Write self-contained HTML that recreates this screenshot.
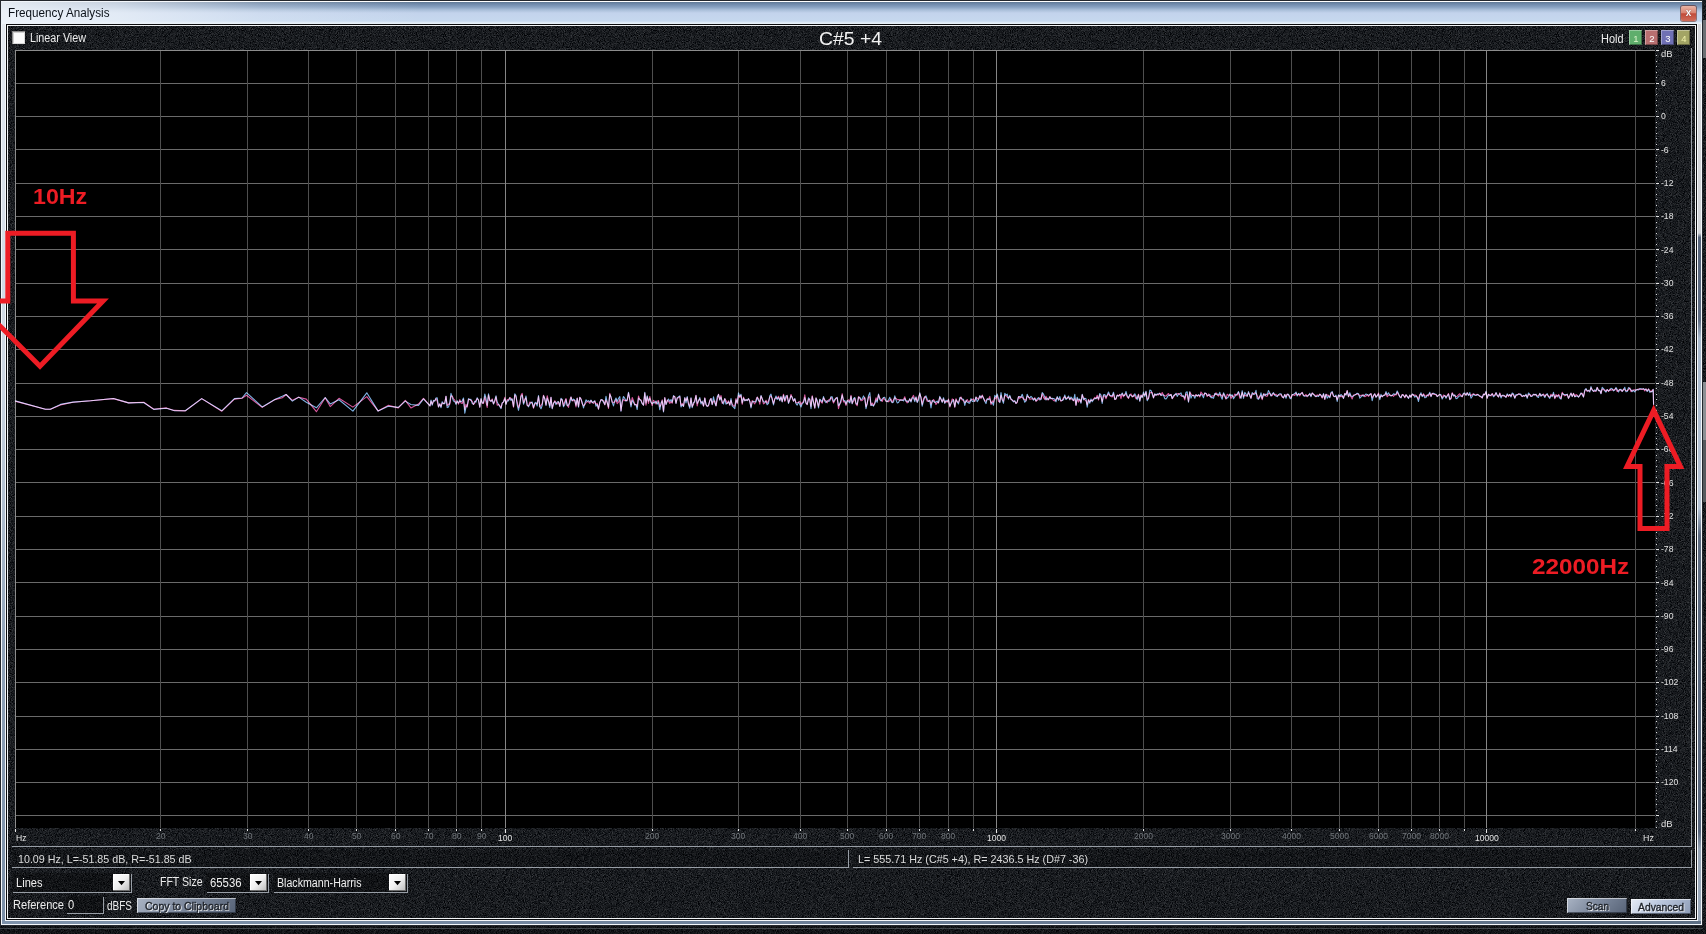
<!DOCTYPE html>
<html lang="en"><head><meta charset="utf-8"><title>Frequency Analysis</title>
<style>
html,body{margin:0;padding:0}
body{width:1706px;height:934px;overflow:hidden;position:relative;background:#17181b;font-family:"Liberation Sans",sans-serif}
#root{position:absolute;left:0;top:0;width:1706px;height:934px;will-change:transform}
#root>div,#root>span,#root>svg{position:absolute;display:block}
.t{white-space:nowrap;line-height:1;transform-origin:0 0}
#tb{background:
 linear-gradient(90deg,rgba(238,243,249,.92) 0,rgba(238,243,249,.72) 115px,rgba(238,243,249,.25) 260px,rgba(238,243,249,0) 420px),
 linear-gradient(180deg,#fff 0,#fff 1px,#5f7894 1px,#6f89aa 3px,#86a0c0 6px,#aabfd9 9px,#c3d3ec 12px,#c6d8ee 20px,#e4eef7 22px,#e8f1f9 23px)}
#panel{background:#1c1e21}
.hb{width:13px;height:15px;font-size:9.5px;line-height:18px;text-indent:1px;text-align:center;box-shadow:inset 1px 1px 0 rgba(255,255,255,.35),inset -1px -1px 0 rgba(0,0,0,.35)}
#cls{background:linear-gradient(180deg,#e9b4a4 0,#d98472 45%,#c24b39 52%,#cf6c5a 100%);border-radius:2px;box-shadow:0 0 0 1px rgba(90,30,20,.55)}
#cls span{position:absolute;left:0;top:-1.5px;width:15px;text-align:center;color:#fff;font-weight:bold;font-size:10px;line-height:15px;text-shadow:0 0 1px #522}
.dd{width:17px;height:17px;background:linear-gradient(135deg,#ffffff 0%,#f0f0f0 50%,#b8b8b8 100%);box-shadow:inset -1px -1px 0 #6c6c6c,inset 1px 1px 0 #fff}
.dd i{position:absolute;left:5px;top:7px;border-left:3.5px solid transparent;border-right:3.5px solid transparent;border-top:4px solid #000}
.btn{box-shadow:inset 1px 1px 0 rgba(255,255,255,.55),inset -1px -1px 0 rgba(20,25,35,.55)}
</style></head>
<body>
<div id="root">
<svg style="left:0;top:0" width="1706" height="934"><filter id="nz" x="0" y="0" width="100%" height="100%" color-interpolation-filters="sRGB"><feTurbulence type="fractalNoise" baseFrequency="1.15" numOctaves="2" seed="4"/><feColorMatrix type="matrix" values="0.42 0 0 0 -0.113  0.42 0 0 0 -0.103  0.42 0 0 0 -0.088  0 0 0 0 1"/></filter><rect width="1706" height="934" filter="url(#nz)"/></svg>
<div style="left:0px;top:926px;width:1706px;height:8px;background:rgba(0,0,0,.22);"></div>
<div style="left:0px;top:928px;width:1703px;height:1px;background:rgba(120,128,136,.45);"></div>
<div style="left:1703px;top:20px;width:3px;height:38px;background:#6c7074;"></div>
<div style="left:1703px;top:382px;width:3px;height:58px;background:#8c9094;"></div>
<div style="left:1703px;top:440px;width:3px;height:62px;background:#565a5e;"></div>
<div style="left:0px;top:0px;width:1703px;height:926px;background:#23272d;"></div>
<div style="left:1px;top:1px;width:1701px;height:924px;background:#f4f7fa;"></div>
<div style="left:2px;top:2px;width:1699px;height:922px;background:#8296ae;"></div>
<div style="left:2px;top:24px;width:3px;height:897px;background:linear-gradient(180deg,#e3e9f0 0,#ccd6e2 40%,#8fa2b8 70%,#7a8ea6 100%);"></div>
<div style="left:1698px;top:24px;width:3px;height:897px;background:linear-gradient(180deg,#d6d8dc 0,#d2d4d8 23.3%,#55637a 23.8%,#5d6b82 33%,#a9b9cd 35%,#b7c5d7 54%,#5a687e 57%,#55637a 90%,#97a5b7 92%,#9eabbb 100%);"></div>
<div style="left:2px;top:921px;width:1699px;height:3px;background:linear-gradient(90deg,#7f93ab,#6b7e96 50%,#5d6f84);"></div>
<div id="tb" style="left:1px;top:1px;width:1701px;height:23px"></div>
<div style="left:5px;top:24px;width:1693px;height:897px;background:#f4f7fa;"></div>
<div style="left:6px;top:24px;width:1691px;height:896px;background:#0c0d0f;"></div>
<div style="left:7px;top:25px;width:1689px;height:894px;background:#f2f4f6;"></div>
<svg id="panel" style="left:8px;top:26px" width="1687" height="892"><rect width="1687" height="892" filter="url(#nz)"/></svg>
<div style="left:12px;top:846px;width:1680px;height:1px;background:#989ea6;"></div>
<div style="left:1691px;top:48px;width:1px;height:799px;background:#989ea6;"></div>
<div style="left:12px;top:850px;width:836px;height:17px;background:rgba(0,0,0,.16);"></div>
<div style="left:853px;top:850px;width:838px;height:17px;background:rgba(0,0,0,.16);"></div>
<div style="left:12px;top:867px;width:837px;height:1px;background:#989ea6;"></div>
<div style="left:848px;top:850px;width:1px;height:18px;background:#989ea6;"></div>
<div style="left:853px;top:867px;width:839px;height:1px;background:#989ea6;"></div>
<div style="left:1691px;top:850px;width:1px;height:18px;background:#989ea6;"></div>
<div style="left:15px;top:50px;width:1640px;height:778px;background:#000;"></div>
<svg style="left:0;top:0" width="1706" height="934" viewBox="0 0 1706 934">
<rect x="15" y="83" width="1640" height="1" fill="#6a6a6a"/>
<rect x="15" y="116" width="1640" height="1" fill="#6a6a6a"/>
<rect x="15" y="149" width="1640" height="1" fill="#6a6a6a"/>
<rect x="15" y="183" width="1640" height="1" fill="#6a6a6a"/>
<rect x="15" y="216" width="1640" height="1" fill="#6a6a6a"/>
<rect x="15" y="249" width="1640" height="1" fill="#6a6a6a"/>
<rect x="15" y="283" width="1640" height="1" fill="#6a6a6a"/>
<rect x="15" y="316" width="1640" height="1" fill="#6a6a6a"/>
<rect x="15" y="349" width="1640" height="1" fill="#6a6a6a"/>
<rect x="15" y="383" width="1640" height="1" fill="#6a6a6a"/>
<rect x="15" y="416" width="1640" height="1" fill="#6a6a6a"/>
<rect x="15" y="449" width="1640" height="1" fill="#6a6a6a"/>
<rect x="15" y="482" width="1640" height="1" fill="#6a6a6a"/>
<rect x="15" y="516" width="1640" height="1" fill="#6a6a6a"/>
<rect x="15" y="549" width="1640" height="1" fill="#6a6a6a"/>
<rect x="15" y="582" width="1640" height="1" fill="#6a6a6a"/>
<rect x="15" y="616" width="1640" height="1" fill="#6a6a6a"/>
<rect x="15" y="649" width="1640" height="1" fill="#6a6a6a"/>
<rect x="15" y="682" width="1640" height="1" fill="#6a6a6a"/>
<rect x="15" y="716" width="1640" height="1" fill="#6a6a6a"/>
<rect x="15" y="749" width="1640" height="1" fill="#6a6a6a"/>
<rect x="15" y="782" width="1640" height="1" fill="#6a6a6a"/>
<rect x="15" y="815" width="1640" height="1" fill="#6a6a6a"/>
<rect x="160" y="50" width="1" height="778" fill="#4e4e4e"/>
<rect x="247" y="50" width="1" height="778" fill="#4e4e4e"/>
<rect x="308" y="50" width="1" height="778" fill="#4e4e4e"/>
<rect x="356" y="50" width="1" height="778" fill="#4e4e4e"/>
<rect x="395" y="50" width="1" height="778" fill="#4e4e4e"/>
<rect x="428" y="50" width="1" height="778" fill="#4e4e4e"/>
<rect x="456" y="50" width="1" height="778" fill="#4e4e4e"/>
<rect x="481" y="50" width="1" height="778" fill="#4e4e4e"/>
<rect x="505" y="50" width="1" height="778" fill="#858585"/>
<rect x="652" y="50" width="1" height="778" fill="#4e4e4e"/>
<rect x="738" y="50" width="1" height="778" fill="#4e4e4e"/>
<rect x="800" y="50" width="1" height="778" fill="#4e4e4e"/>
<rect x="847" y="50" width="1" height="778" fill="#4e4e4e"/>
<rect x="886" y="50" width="1" height="778" fill="#4e4e4e"/>
<rect x="919" y="50" width="1" height="778" fill="#4e4e4e"/>
<rect x="948" y="50" width="1" height="778" fill="#4e4e4e"/>
<rect x="973" y="50" width="1" height="778" fill="#4e4e4e"/>
<rect x="996" y="50" width="1" height="778" fill="#858585"/>
<rect x="1143" y="50" width="1" height="778" fill="#4e4e4e"/>
<rect x="1230" y="50" width="1" height="778" fill="#4e4e4e"/>
<rect x="1291" y="50" width="1" height="778" fill="#4e4e4e"/>
<rect x="1339" y="50" width="1" height="778" fill="#4e4e4e"/>
<rect x="1378" y="50" width="1" height="778" fill="#4e4e4e"/>
<rect x="1411" y="50" width="1" height="778" fill="#4e4e4e"/>
<rect x="1439" y="50" width="1" height="778" fill="#4e4e4e"/>
<rect x="1464" y="50" width="1" height="778" fill="#4e4e4e"/>
<rect x="1486" y="50" width="1" height="778" fill="#858585"/>
<rect x="1635" y="50" width="1" height="778" fill="#4e4e4e"/>
<rect x="15" y="50" width="1640" height="1" fill="#8c8c8c"/>
<rect x="15" y="50" width="1" height="778" fill="#8c8c8c"/>
<polyline points="15.1,400.9 45.4,409.2 50.4,409.2 60.5,404.4 73.0,402.1 90.7,400.8 113.4,398.5 128.6,402.9 143.7,402.5 153.8,409.4 166.4,408.2 174.0,410.6 185.3,410.8 201.7,398.6 221.8,410.8 234.4,398.6 242.0,398.0 246.5,392.7 262.2,406.9 274.8,399.6 282.3,396.3 286.1,394.5 292.4,401.1 298.7,397.1 306.3,402.2 316.4,407.8 325.2,397.5 330.2,403.9 339.0,399.8 352.9,411.1 366.8,392.8 378.1,411.1 388.2,406.2 398.3,407.4 405.3,401.1 410.9,404.5 418.5,405.4 423.5,398.9 430.0,405.9 431.0,400.1 432.2,405.2 433.5,400.4 434.8,401.1 436.0,398.0 437.2,397.8 438.5,406.9 439.8,404.1 441.0,407.7 442.2,401.7 443.5,403.6 444.8,403.6 446.0,396.4 447.2,407.6 448.5,407.1 449.8,402.7 451.0,393.3 452.2,397.2 453.5,401.1 454.8,401.6 456.0,404.4 457.2,400.7 458.5,403.0 459.8,401.0 461.0,401.8 462.2,400.8 463.5,398.0 464.8,413.2 466.0,407.1 467.2,406.0 468.5,398.6 469.8,399.6 471.0,399.4 472.2,403.3 473.5,404.4 474.8,401.2 476.0,402.2 477.2,397.7 478.5,400.3 479.8,407.1 481.0,398.5 482.2,403.2 483.5,402.5 484.8,394.0 486.0,398.5 487.2,405.5 488.5,393.9 489.8,400.5 491.0,401.3 492.2,399.8 493.5,404.0 494.8,400.2 496.0,395.8 497.2,402.0 498.5,404.2 499.8,406.4 501.0,408.6 502.2,402.9 503.5,401.8 504.8,398.8 506.0,404.2 507.2,400.7 508.5,400.9 509.8,397.8 511.0,400.4 512.2,398.9 513.5,406.5 514.8,393.8 516.0,395.6 517.2,404.8 518.5,410.3 519.8,404.0 521.0,396.3 522.2,395.2 523.5,404.2 524.8,400.9 526.0,396.0 527.2,404.7 528.5,406.8 529.8,404.2 531.0,402.6 532.2,402.0 533.5,407.7 534.8,403.0 536.0,402.3 537.2,406.0 538.5,395.5 539.8,406.8 541.0,408.7 542.2,405.4 543.5,395.7 544.8,398.4 546.0,405.5 547.2,398.1 548.5,401.7 549.8,407.5 551.0,397.4 552.2,408.8 553.5,403.3 554.8,401.5 556.0,404.6 557.2,401.9 558.5,401.7 559.8,406.4 561.0,398.4 562.2,399.5 563.5,406.8 564.8,404.4 566.0,399.5 567.2,405.7 568.5,405.0 569.8,402.8 571.0,397.1 572.2,400.8 573.5,399.1 574.8,400.2 576.0,405.3 577.2,398.2 578.5,407.1 579.8,397.4 581.0,399.2 582.2,402.5 583.5,407.9 584.8,403.7 586.0,399.8 587.2,401.4 588.5,400.6 589.8,402.0 591.0,400.1 592.2,402.7 593.5,401.7 594.8,400.9 596.0,406.3 597.2,404.4 598.5,409.0 599.8,402.6 601.0,399.6 602.2,399.9 603.5,402.1 604.8,404.6 606.0,396.4 607.2,402.6 608.5,407.1 609.8,394.4 611.0,396.8 612.2,402.2 613.5,405.9 614.8,400.4 616.0,398.0 617.2,401.5 618.5,398.5 619.8,396.6 621.0,411.2 622.2,401.4 623.5,396.5 624.8,398.4 626.0,401.2 627.2,399.6 628.5,392.4 629.8,400.0 631.0,406.9 632.2,400.4 633.5,402.3 634.8,404.9 636.0,404.5 637.2,409.5 638.5,398.1 639.8,399.4 641.0,400.6 642.2,403.7 643.5,405.2 644.8,392.4 646.0,403.1 647.2,395.9 648.5,401.2 649.8,398.4 651.0,402.3 652.2,403.7 653.5,402.5 654.8,402.9 656.0,401.0 657.2,404.1 658.5,401.8 659.8,409.8 661.0,403.0 662.2,400.7 663.5,412.0 664.8,397.8 666.0,404.5 667.2,401.6 668.5,399.0 669.8,401.6 671.0,399.5 672.2,402.3 673.5,395.5 674.8,397.0 676.0,403.5 677.2,398.0 678.5,396.8 679.8,395.9 681.0,406.9 682.2,404.7 683.5,406.4 684.8,397.6 686.0,403.0 687.2,396.6 688.5,404.5 689.8,408.3 691.0,397.8 692.2,407.7 693.5,402.7 694.8,401.7 696.0,395.5 697.2,403.5 698.5,401.3 699.8,397.6 701.0,404.0 702.2,401.1 703.5,405.9 704.8,398.2 706.0,404.3 707.2,406.5 708.5,405.1 709.8,401.1 711.0,398.5 712.2,404.6 713.5,396.8 714.8,402.7 716.0,405.8 717.2,397.1 718.5,394.4 719.8,400.2 721.0,397.1 722.2,401.9 723.5,404.0 724.8,398.6 726.0,404.1 727.2,403.3 728.5,401.8 729.8,404.7 731.0,398.6 732.2,405.9 733.5,407.2 734.8,408.6 736.0,399.9 737.2,402.7 738.5,392.9 739.8,396.6 741.0,394.2 742.2,403.0 743.5,398.0 744.8,400.9 746.0,399.5 747.2,400.6 748.5,398.6 749.8,401.5 751.0,407.9 752.2,402.0 753.5,401.2 754.8,401.7 756.0,402.0 757.2,397.2 758.5,400.6 759.8,401.7 761.0,395.5 762.2,398.8 763.5,401.7 764.8,402.3 766.0,401.4 767.2,404.7 768.5,403.3 769.8,395.9 771.0,394.1 772.2,399.4 773.5,404.9 774.8,399.1 776.0,396.0 777.2,399.5 778.5,397.5 779.8,400.8 781.0,396.5 782.2,402.0 783.5,395.4 784.8,400.5 786.0,395.8 787.2,395.8 788.5,403.4 789.8,399.5 791.0,395.9 792.2,397.1 793.5,401.1 794.8,398.6 796.0,403.7 797.2,405.1 798.5,402.1 799.8,404.4 801.0,407.0 802.2,403.6 803.5,402.6 804.8,397.6 806.0,402.9 807.2,404.4 808.5,397.8 809.8,399.7 811.0,408.7 812.2,396.5 813.5,402.3 814.8,407.9 816.0,398.1 817.2,400.3 818.5,408.0 819.8,399.2 821.0,400.3 822.2,401.9 823.5,396.6 824.8,401.1 826.0,402.6 827.2,400.7 828.5,401.3 829.8,400.9 831.0,396.7 832.2,396.9 833.5,401.8 834.8,399.4 836.0,398.4 837.2,397.4 838.5,405.7 839.8,404.1 841.0,399.8 842.2,395.1 843.5,400.2 844.8,400.5 846.0,404.2 847.2,400.5 848.5,401.7 849.8,402.9 851.0,396.2 852.2,403.8 853.5,398.7 854.8,397.5 856.0,403.4 857.2,404.3 858.5,397.3 859.8,397.2 861.0,399.8 862.2,398.9 863.5,395.9 864.8,398.5 866.0,408.6 867.2,403.4 868.5,395.6 869.8,392.6 871.0,405.5 872.2,404.8 873.5,406.1 874.8,403.8 876.0,400.0 877.2,402.3 878.5,394.1 879.8,399.7 881.0,400.8 882.2,399.1 883.5,397.5 884.8,397.4 886.0,401.1 887.2,401.8 888.5,400.2 889.8,397.3 891.0,401.0 892.2,402.8 893.5,402.1 894.8,395.9 896.0,399.9 897.2,402.9 898.5,402.5 899.8,399.9 901.0,400.1 902.2,400.0 903.5,400.9 904.8,398.4 906.0,401.1 907.2,400.9 908.5,402.1 909.8,398.6 911.0,402.0 912.2,397.9 913.5,397.8 914.8,401.6 916.0,396.9 917.2,402.4 918.5,399.9 919.8,392.9 921.0,398.0 922.2,406.2 923.5,400.7 924.8,397.3 926.0,395.9 927.2,399.3 928.5,401.5 929.8,400.7 931.0,407.9 932.2,400.4 933.5,401.2 934.8,402.5 936.0,402.0 937.2,401.2 938.5,402.9 939.8,396.4 941.0,399.0 942.2,402.4 943.5,397.7 944.8,403.4 946.0,400.3 947.2,401.4 948.5,399.9 949.8,406.2 951.0,403.6 952.2,401.4 953.5,399.8 954.8,406.9 956.0,399.8 957.2,401.5 958.5,404.0 959.8,397.6 961.0,397.9 962.2,399.2 963.5,399.3 964.8,405.4 966.0,400.4 967.2,402.1 968.5,402.9 969.8,403.2 971.0,398.6 972.2,401.4 973.5,401.1 974.8,401.2 976.0,397.0 977.2,401.7 978.5,399.7 979.8,395.6 981.0,397.5 982.2,395.8 983.5,398.4 984.8,401.3 986.0,403.6 987.2,398.7 988.5,399.6 989.8,398.6 991.0,403.0 992.2,402.4 993.5,405.2 994.8,395.4 996.0,397.3 997.2,394.0 998.5,398.7 999.8,402.6 1001.0,392.6 1002.2,399.9 1003.5,403.2 1004.8,393.2 1006.0,395.1 1007.2,394.2 1008.5,399.2 1009.8,395.3 1011.0,399.0 1012.2,400.1 1013.5,401.9 1014.8,400.7 1016.0,403.5 1017.2,401.7 1018.5,396.8 1019.8,396.5 1021.0,397.2 1022.2,394.2 1023.5,398.4 1024.8,402.2 1026.0,400.8 1027.2,394.2 1028.5,397.2 1029.8,397.8 1031.0,396.4 1032.2,397.6 1033.5,400.3 1034.8,398.4 1036.0,401.0 1037.2,398.9 1038.5,397.5 1039.8,400.0 1041.0,399.3 1042.2,392.5 1043.5,394.2 1044.8,397.3 1046.0,400.0 1047.2,398.1 1048.5,399.6 1049.8,396.9 1051.0,398.6 1052.2,398.3 1053.5,398.5 1054.8,399.3 1056.0,401.8 1057.2,396.5 1058.5,400.3 1059.8,396.6 1061.0,400.8 1062.2,400.5 1063.5,399.5 1064.8,395.0 1066.0,399.5 1067.2,398.4 1068.5,396.0 1069.8,399.8 1071.0,397.0 1072.2,398.4 1073.5,400.6 1074.8,394.4 1076.0,405.1 1077.2,397.2 1078.5,399.9 1079.8,399.0 1081.0,403.3 1082.2,394.2 1083.5,399.8 1084.8,398.2 1086.0,398.7 1087.2,407.2 1088.5,400.1 1089.8,403.2 1091.0,399.0 1092.2,401.7 1093.5,399.6 1094.8,398.3 1096.0,398.8 1097.2,397.0 1098.5,399.0 1099.8,393.5 1101.0,395.0 1102.2,403.5 1103.5,394.7 1104.8,394.5 1106.0,397.3 1107.2,395.0 1108.5,392.0 1109.8,395.3 1111.0,395.6 1112.2,396.0 1113.5,392.2 1114.8,399.5 1116.0,398.5 1117.2,395.3 1118.5,396.1 1119.8,394.8 1121.0,395.3 1122.2,393.0 1123.5,395.6 1124.8,395.4 1126.0,391.5 1127.2,395.8 1128.5,397.9 1129.8,394.6 1131.0,395.4 1132.2,396.4 1133.5,396.5 1134.8,393.7 1136.0,396.1 1137.2,399.7 1138.5,394.8 1139.8,401.3 1141.0,395.3 1142.2,397.7 1143.5,392.1 1144.8,396.4 1146.0,391.2 1147.2,400.8 1148.5,398.5 1149.8,390.0 1151.0,390.5 1152.2,394.0 1153.5,397.7 1154.8,393.7 1156.0,395.4 1157.2,393.9 1158.5,394.1 1159.8,393.4 1161.0,395.4 1162.2,394.9 1163.5,395.0 1164.8,398.6 1166.0,398.9 1167.2,397.3 1168.5,395.1 1169.8,395.7 1171.0,394.5 1172.2,398.5 1173.5,395.8 1174.8,394.8 1176.0,393.3 1177.2,396.4 1178.5,394.3 1179.8,393.8 1181.0,392.9 1182.2,396.2 1183.5,395.8 1184.8,398.2 1186.0,392.2 1187.2,391.8 1188.5,402.3 1189.8,391.9 1191.0,398.1 1192.2,395.4 1193.5,395.2 1194.8,398.2 1196.0,394.9 1197.2,396.2 1198.5,394.7 1199.8,395.9 1201.0,394.2 1202.2,395.1 1203.5,397.7 1204.8,392.9 1206.0,393.4 1207.2,395.2 1208.5,395.5 1209.8,394.4 1211.0,397.6 1212.2,397.4 1213.5,398.3 1214.8,393.5 1216.0,394.5 1217.2,394.0 1218.5,395.0 1219.8,392.3 1221.0,396.7 1222.2,399.2 1223.5,392.8 1224.8,395.3 1226.0,398.6 1227.2,398.0 1228.5,396.9 1229.8,394.0 1231.0,395.7 1232.2,394.8 1233.5,398.8 1234.8,396.8 1236.0,394.7 1237.2,394.0 1238.5,391.6 1239.8,395.3 1241.0,398.4 1242.2,390.7 1243.5,398.3 1244.8,392.3 1246.0,394.1 1247.2,396.3 1248.5,391.6 1249.8,395.9 1251.0,398.2 1252.2,392.5 1253.5,394.5 1254.8,394.3 1256.0,390.4 1257.2,398.5 1258.5,399.3 1259.8,397.1 1261.0,392.8 1262.2,398.6 1263.5,393.8 1264.8,395.7 1266.0,394.0 1267.2,394.9 1268.5,390.5 1269.8,393.0 1271.0,396.0 1272.2,393.9 1273.5,392.7 1274.8,395.3 1276.0,395.9 1277.2,396.6 1278.5,394.6 1279.8,393.8 1281.0,393.7 1282.2,396.4 1283.5,397.9 1284.8,394.5 1286.0,398.3 1287.2,394.3 1288.5,394.2 1289.8,398.0 1291.0,398.9 1292.2,394.7 1293.5,394.3 1294.8,393.6 1296.0,392.0 1297.2,396.0 1298.5,393.4 1299.8,394.5 1301.0,393.7 1302.2,392.6 1303.5,395.8 1304.8,396.2 1306.0,395.8 1307.2,395.9 1308.5,395.7 1309.8,393.3 1311.0,396.7 1312.2,393.1 1313.5,394.4 1314.8,396.0 1316.0,396.6 1317.2,396.0 1318.5,396.5 1319.8,394.3 1321.0,395.1 1322.2,397.4 1323.5,393.6 1324.8,399.2 1326.0,394.2 1327.2,398.1 1328.5,396.1 1329.8,397.7 1331.0,392.6 1332.2,391.6 1333.5,395.9 1334.8,396.7 1336.0,395.2 1337.2,401.5 1338.5,394.9 1339.8,396.6 1341.0,394.4 1342.2,395.8 1343.5,398.4 1344.8,393.6 1346.0,395.2 1347.2,390.8 1348.5,396.7 1349.8,392.7 1351.0,396.0 1352.2,396.6 1353.5,395.7 1354.8,395.1 1356.0,394.2 1357.2,393.2 1358.5,393.7 1359.8,398.1 1361.0,396.9 1362.2,395.2 1363.5,396.2 1364.8,395.1 1366.0,394.0 1367.2,394.4 1368.5,395.4 1369.8,394.3 1371.0,393.8 1372.2,400.7 1373.5,395.3 1374.8,393.9 1376.0,397.3 1377.2,395.7 1378.5,394.0 1379.8,399.7 1381.0,394.4 1382.2,396.8 1383.5,395.2 1384.8,395.3 1386.0,391.6 1387.2,395.0 1388.5,392.8 1389.8,395.3 1391.0,395.9 1392.2,395.3 1393.5,393.9 1394.8,394.3 1396.0,394.3 1397.2,391.0 1398.5,393.6 1399.8,397.0 1401.0,397.9 1402.2,394.6 1403.5,395.5 1404.8,397.2 1406.0,394.8 1407.2,396.4 1408.5,398.5 1409.8,395.1 1411.0,397.1 1412.2,394.1 1413.5,394.8 1414.8,397.2 1416.0,395.8 1417.2,397.4 1418.5,401.5 1419.8,395.7 1421.0,392.8 1422.2,396.6 1423.5,394.6 1424.8,397.8 1426.0,397.4 1427.2,395.5 1428.5,394.8 1429.8,392.3 1431.0,396.6 1432.2,393.7 1433.5,393.2 1434.8,394.0 1436.0,394.2 1437.2,396.6 1438.5,395.6 1439.8,394.3 1441.0,394.8 1442.2,399.0 1443.5,396.7 1444.8,395.6 1446.0,398.2 1447.2,396.0 1448.5,394.2 1449.8,399.7 1451.0,398.0 1452.2,393.2 1453.5,396.1 1454.8,394.9 1456.0,398.7 1457.2,398.3 1458.5,396.6 1459.8,395.8 1461.0,396.0 1462.2,396.5 1463.5,393.2 1464.8,393.0 1466.0,395.2 1467.2,392.7 1468.5,395.5 1469.8,392.6 1471.0,398.1 1472.2,396.5 1473.5,394.0 1474.8,395.3 1476.0,395.5 1477.2,394.6 1478.5,394.9 1479.8,396.2 1481.0,396.2 1482.2,398.0 1483.5,394.1 1484.8,394.9 1486.0,391.3 1487.2,398.2 1488.5,394.3 1489.8,395.7 1491.0,394.9 1492.2,393.9 1493.5,396.8 1494.8,395.7 1496.0,392.6 1497.2,395.1 1498.5,396.8 1499.8,393.6 1501.0,397.9 1502.2,395.3 1503.5,395.2 1504.8,396.2 1506.0,397.4 1507.2,393.9 1508.5,395.7 1509.8,394.5 1511.0,396.9 1512.2,393.0 1513.5,394.0 1514.8,398.3 1516.0,394.6 1517.2,395.0 1518.5,394.1 1519.8,394.1 1521.0,394.4 1522.2,396.5 1523.5,395.4 1524.8,396.3 1526.0,394.2 1527.2,398.3 1528.5,393.0 1529.8,394.3 1531.0,396.5 1532.2,396.2 1533.5,394.2 1534.8,395.0 1536.0,394.2 1537.2,396.8 1538.5,397.4 1539.8,393.3 1541.0,396.2 1542.2,394.4 1543.5,394.9 1544.8,397.5 1546.0,394.8 1547.2,393.6 1548.5,396.7 1549.8,398.3 1551.0,395.4 1552.2,396.6 1553.5,392.3 1554.8,397.9 1556.0,396.0 1557.2,395.7 1558.5,395.5 1559.8,398.2 1561.0,399.2 1562.2,393.4 1563.5,394.3 1564.8,394.6 1566.0,394.9 1567.2,394.2 1568.5,398.3 1569.8,395.9 1571.0,393.1 1572.2,396.6 1573.5,393.6 1574.8,396.8 1576.0,396.3 1577.2,395.8 1578.5,397.1 1579.8,395.1 1581.0,392.9 1582.2,394.6 1583.5,397.0 1584.8,389.9 1586.0,388.6 1587.2,391.0 1588.5,390.2 1589.8,392.0 1591.0,386.6 1592.2,390.2 1593.5,391.4 1594.8,389.8 1596.0,391.2 1597.2,387.4 1598.5,390.7 1599.8,390.2 1601.0,393.7 1602.2,387.4 1603.5,388.6 1604.8,390.8 1606.0,392.2 1607.2,389.5 1608.5,390.9 1609.8,390.3 1611.0,388.3 1612.2,388.7 1613.5,390.9 1614.8,390.0 1616.0,387.4 1617.2,389.6 1618.5,391.9 1619.8,389.6 1621.0,389.4 1622.2,391.4 1623.5,389.9 1624.8,387.3 1626.0,391.8 1627.2,391.5 1628.5,387.6 1629.8,388.7 1631.0,389.9 1632.2,391.6 1633.5,390.4 1634.8,392.0 1636.0,389.7 1637.2,389.6 1638.5,390.0 1639.8,388.6 1641.0,388.7 1642.2,389.0 1643.5,388.8 1644.8,389.8 1646.0,389.2 1647.2,391.4 1648.5,389.1 1649.8,392.2 1651.0,391.5 1652.2,391.6 1653.2,389.2 1653.6,405.3" fill="none" stroke="#7fb2e4" stroke-width="1.1" stroke-linejoin="round" style="mix-blend-mode:screen"/>
<polyline points="15.1,401.1 45.4,409.2 50.4,409.2 60.5,404.9 73.0,402.3 90.7,400.8 113.4,398.6 128.6,402.9 143.7,402.3 153.8,409.2 166.4,407.9 174.0,410.4 185.3,410.9 201.7,398.6 221.8,411.2 234.4,399.1 242.0,398.3 246.5,395.3 262.2,407.4 274.8,399.6 282.3,397.8 286.1,394.5 292.4,400.3 298.7,397.3 306.3,399.1 316.4,411.7 325.2,397.8 330.2,406.6 339.0,398.3 352.9,407.1 366.8,396.6 378.1,410.9 388.2,405.4 398.3,407.9 405.3,400.3 410.9,407.9 418.5,404.1 423.5,398.3 430.0,405.9 431.0,401.0 432.2,404.2 433.5,401.1 434.8,400.8 436.0,398.7 437.2,401.1 438.5,406.9 439.8,403.8 441.0,406.6 442.2,403.0 443.5,403.6 444.8,402.7 446.0,396.2 447.2,405.7 448.5,404.1 449.8,404.1 451.0,396.1 452.2,396.0 453.5,398.8 454.8,400.2 456.0,403.2 457.2,401.6 458.5,404.1 459.8,399.6 461.0,403.1 462.2,403.5 463.5,399.5 464.8,409.4 466.0,404.2 467.2,407.1 468.5,399.7 469.8,399.3 471.0,400.6 472.2,401.3 473.5,404.5 474.8,402.8 476.0,400.2 477.2,398.5 478.5,400.0 479.8,407.1 481.0,399.0 482.2,402.7 483.5,403.5 484.8,396.8 486.0,401.8 487.2,407.4 488.5,395.1 489.8,400.6 491.0,401.3 492.2,398.9 493.5,403.8 494.8,401.4 496.0,396.8 497.2,405.2 498.5,404.5 499.8,405.7 501.0,407.8 502.2,403.1 503.5,402.1 504.8,397.4 506.0,404.2 507.2,399.6 508.5,400.1 509.8,397.5 511.0,398.4 512.2,399.8 513.5,407.1 514.8,395.0 516.0,396.8 517.2,402.5 518.5,407.7 519.8,404.0 521.0,395.4 522.2,393.4 523.5,403.0 524.8,399.1 526.0,397.9 527.2,405.6 528.5,406.1 529.8,402.1 531.0,402.5 532.2,403.3 533.5,408.2 534.8,404.0 536.0,403.6 537.2,403.7 538.5,396.5 539.8,406.8 541.0,405.4 542.2,403.6 543.5,395.2 544.8,399.4 546.0,404.9 547.2,395.7 548.5,400.8 549.8,405.6 551.0,397.2 552.2,408.1 553.5,403.6 554.8,400.8 556.0,402.7 557.2,404.0 558.5,401.8 559.8,406.1 561.0,399.2 562.2,400.0 563.5,405.6 564.8,401.4 566.0,398.5 567.2,405.2 568.5,407.3 569.8,399.9 571.0,397.0 572.2,400.8 573.5,400.8 574.8,400.3 576.0,407.0 577.2,398.1 578.5,406.4 579.8,397.3 581.0,398.8 582.2,403.8 583.5,405.8 584.8,404.7 586.0,402.6 587.2,401.7 588.5,401.8 589.8,403.5 591.0,400.6 592.2,402.2 593.5,403.4 594.8,401.1 596.0,404.2 597.2,403.4 598.5,409.2 599.8,402.4 601.0,399.8 602.2,400.0 603.5,401.0 604.8,404.8 606.0,400.0 607.2,402.6 608.5,408.4 609.8,393.4 611.0,397.7 612.2,402.0 613.5,402.6 614.8,402.0 616.0,399.7 617.2,403.6 618.5,402.1 619.8,399.4 621.0,410.6 622.2,402.4 623.5,399.3 624.8,400.7 626.0,400.3 627.2,400.8 628.5,393.0 629.8,399.5 631.0,404.9 632.2,397.5 633.5,400.7 634.8,404.7 636.0,404.3 637.2,406.8 638.5,396.0 639.8,399.9 641.0,399.9 642.2,403.3 643.5,405.1 644.8,393.1 646.0,405.1 647.2,396.7 648.5,403.5 649.8,396.5 651.0,401.5 652.2,405.5 653.5,400.4 654.8,401.6 656.0,403.9 657.2,401.4 658.5,400.5 659.8,406.7 661.0,404.8 662.2,399.9 663.5,411.3 664.8,397.5 666.0,404.3 667.2,400.0 668.5,401.3 669.8,403.4 671.0,401.6 672.2,403.2 673.5,396.4 674.8,396.5 676.0,403.1 677.2,398.0 678.5,397.8 679.8,396.6 681.0,405.5 682.2,403.5 683.5,406.2 684.8,398.1 686.0,400.7 687.2,397.5 688.5,403.5 689.8,406.6 691.0,398.2 692.2,406.5 693.5,404.3 694.8,400.1 696.0,395.2 697.2,405.9 698.5,400.3 699.8,398.9 701.0,402.1 702.2,402.1 703.5,406.1 704.8,397.8 706.0,404.8 707.2,406.1 708.5,405.9 709.8,400.1 711.0,398.5 712.2,404.3 713.5,401.0 714.8,401.0 716.0,405.8 717.2,399.8 718.5,394.3 719.8,399.5 721.0,395.5 722.2,403.5 723.5,401.7 724.8,398.8 726.0,400.5 727.2,403.5 728.5,400.8 729.8,405.3 731.0,400.3 732.2,404.2 733.5,405.8 734.8,406.3 736.0,398.6 737.2,403.6 738.5,395.4 739.8,397.5 741.0,395.2 742.2,404.3 743.5,397.1 744.8,400.4 746.0,399.9 747.2,400.3 748.5,398.8 749.8,401.2 751.0,406.8 752.2,400.5 753.5,402.3 754.8,403.9 756.0,399.8 757.2,397.1 758.5,398.9 759.8,404.1 761.0,396.0 762.2,398.8 763.5,403.9 764.8,403.1 766.0,400.3 767.2,403.1 768.5,400.9 769.8,397.2 771.0,396.2 772.2,398.6 773.5,403.5 774.8,398.8 776.0,397.9 777.2,398.3 778.5,396.3 779.8,400.0 781.0,397.2 782.2,401.5 783.5,394.2 784.8,401.4 786.0,398.6 787.2,395.3 788.5,402.7 789.8,399.5 791.0,394.5 792.2,398.0 793.5,401.2 794.8,399.0 796.0,402.8 797.2,402.7 798.5,402.4 799.8,401.3 801.0,404.7 802.2,402.4 803.5,401.7 804.8,394.9 806.0,403.2 807.2,404.6 808.5,399.4 809.8,399.0 811.0,406.6 812.2,395.7 813.5,401.7 814.8,408.2 816.0,397.8 817.2,402.4 818.5,406.4 819.8,399.8 821.0,401.9 822.2,403.1 823.5,397.8 824.8,399.8 826.0,401.0 827.2,402.8 828.5,400.0 829.8,399.6 831.0,397.5 832.2,399.2 833.5,403.0 834.8,400.4 836.0,397.9 837.2,398.0 838.5,408.7 839.8,403.7 841.0,402.1 842.2,393.7 843.5,402.0 844.8,401.5 846.0,405.4 847.2,401.4 848.5,399.8 849.8,401.6 851.0,395.3 852.2,403.3 853.5,401.0 854.8,398.3 856.0,404.2 857.2,405.7 858.5,396.6 859.8,398.3 861.0,400.8 862.2,400.5 863.5,398.9 864.8,397.6 866.0,406.7 867.2,403.2 868.5,397.1 869.8,396.7 871.0,405.3 872.2,403.0 873.5,405.6 874.8,402.4 876.0,397.8 877.2,400.7 878.5,394.8 879.8,398.1 881.0,399.7 882.2,401.5 883.5,398.1 884.8,399.5 886.0,401.2 887.2,401.0 888.5,401.8 889.8,400.4 891.0,399.0 892.2,402.2 893.5,399.9 894.8,397.9 896.0,398.3 897.2,399.7 898.5,399.5 899.8,400.2 901.0,399.7 902.2,400.3 903.5,399.4 904.8,396.8 906.0,401.0 907.2,402.9 908.5,401.0 909.8,399.3 911.0,401.1 912.2,397.5 913.5,395.4 914.8,399.9 916.0,397.6 917.2,401.9 918.5,397.2 919.8,393.7 921.0,397.3 922.2,404.4 923.5,398.8 924.8,396.6 926.0,397.9 927.2,401.2 928.5,401.1 929.8,400.1 931.0,404.1 932.2,401.7 933.5,399.5 934.8,401.4 936.0,404.5 937.2,402.5 938.5,402.6 939.8,397.2 941.0,399.2 942.2,401.7 943.5,398.9 944.8,402.7 946.0,401.3 947.2,402.2 948.5,399.1 949.8,407.0 951.0,403.2 952.2,399.0 953.5,399.8 954.8,407.1 956.0,398.7 957.2,402.0 958.5,402.3 959.8,399.5 961.0,396.9 962.2,400.0 963.5,400.5 964.8,402.7 966.0,401.7 967.2,399.5 968.5,401.9 969.8,401.0 971.0,400.0 972.2,399.6 973.5,398.9 974.8,401.4 976.0,397.2 977.2,398.1 978.5,399.4 979.8,396.3 981.0,398.5 982.2,395.1 983.5,397.9 984.8,401.0 986.0,401.0 987.2,399.2 988.5,398.9 989.8,396.4 991.0,404.5 992.2,400.8 993.5,402.4 994.8,397.5 996.0,398.9 997.2,395.5 998.5,401.5 999.8,401.9 1001.0,395.4 1002.2,399.2 1003.5,401.1 1004.8,395.7 1006.0,395.5 1007.2,397.1 1008.5,398.0 1009.8,396.4 1011.0,399.4 1012.2,400.0 1013.5,401.1 1014.8,401.2 1016.0,403.4 1017.2,402.5 1018.5,396.6 1019.8,398.3 1021.0,397.1 1022.2,397.1 1023.5,399.1 1024.8,399.3 1026.0,400.6 1027.2,396.1 1028.5,396.8 1029.8,399.3 1031.0,398.9 1032.2,398.7 1033.5,399.2 1034.8,397.8 1036.0,401.2 1037.2,400.3 1038.5,399.1 1039.8,398.0 1041.0,399.0 1042.2,393.9 1043.5,397.4 1044.8,399.4 1046.0,396.3 1047.2,399.8 1048.5,399.7 1049.8,396.6 1051.0,398.8 1052.2,398.7 1053.5,400.5 1054.8,400.9 1056.0,399.2 1057.2,397.6 1058.5,399.0 1059.8,399.2 1061.0,401.2 1062.2,400.1 1063.5,397.9 1064.8,396.7 1066.0,398.6 1067.2,397.9 1068.5,397.2 1069.8,399.1 1071.0,398.4 1072.2,399.6 1073.5,400.7 1074.8,398.5 1076.0,405.3 1077.2,398.7 1078.5,402.1 1079.8,399.6 1081.0,402.2 1082.2,394.8 1083.5,397.9 1084.8,399.9 1086.0,400.7 1087.2,404.9 1088.5,399.5 1089.8,401.8 1091.0,400.2 1092.2,400.5 1093.5,399.2 1094.8,397.4 1096.0,398.7 1097.2,395.2 1098.5,400.0 1099.8,394.9 1101.0,397.2 1102.2,401.7 1103.5,395.8 1104.8,396.0 1106.0,398.7 1107.2,395.6 1108.5,393.9 1109.8,395.8 1111.0,396.5 1112.2,396.9 1113.5,393.7 1114.8,399.4 1116.0,399.2 1117.2,395.1 1118.5,395.8 1119.8,394.3 1121.0,398.6 1122.2,393.8 1123.5,396.8 1124.8,394.2 1126.0,393.8 1127.2,396.9 1128.5,398.3 1129.8,395.1 1131.0,393.9 1132.2,397.1 1133.5,395.0 1134.8,395.9 1136.0,398.8 1137.2,397.8 1138.5,394.2 1139.8,400.6 1141.0,395.1 1142.2,397.0 1143.5,394.0 1144.8,395.0 1146.0,392.0 1147.2,399.4 1148.5,398.3 1149.8,393.0 1151.0,392.5 1152.2,392.3 1153.5,397.9 1154.8,394.3 1156.0,395.0 1157.2,394.6 1158.5,394.9 1159.8,393.2 1161.0,395.2 1162.2,392.6 1163.5,395.0 1164.8,395.8 1166.0,396.2 1167.2,394.7 1168.5,393.5 1169.8,395.5 1171.0,394.3 1172.2,398.7 1173.5,396.9 1174.8,394.9 1176.0,394.3 1177.2,393.9 1178.5,393.5 1179.8,394.5 1181.0,395.8 1182.2,396.3 1183.5,396.4 1184.8,399.9 1186.0,393.9 1187.2,395.1 1188.5,401.4 1189.8,392.0 1191.0,394.2 1192.2,395.5 1193.5,395.4 1194.8,396.0 1196.0,394.7 1197.2,395.9 1198.5,395.2 1199.8,396.8 1201.0,392.0 1202.2,393.6 1203.5,395.1 1204.8,393.4 1206.0,393.4 1207.2,396.5 1208.5,394.0 1209.8,396.5 1211.0,396.7 1212.2,395.8 1213.5,396.2 1214.8,394.9 1216.0,392.8 1217.2,395.1 1218.5,396.1 1219.8,394.2 1221.0,394.9 1222.2,396.7 1223.5,393.7 1224.8,396.5 1226.0,399.1 1227.2,394.2 1228.5,395.4 1229.8,394.9 1231.0,398.4 1232.2,395.8 1233.5,397.0 1234.8,394.0 1236.0,395.1 1237.2,395.1 1238.5,392.3 1239.8,398.1 1241.0,397.0 1242.2,392.4 1243.5,396.7 1244.8,394.9 1246.0,396.0 1247.2,395.9 1248.5,392.8 1249.8,394.8 1251.0,398.2 1252.2,394.2 1253.5,393.5 1254.8,393.0 1256.0,393.2 1257.2,395.8 1258.5,398.6 1259.8,396.0 1261.0,395.6 1262.2,399.7 1263.5,394.3 1264.8,394.1 1266.0,396.2 1267.2,396.2 1268.5,393.6 1269.8,393.3 1271.0,395.6 1272.2,395.6 1273.5,393.3 1274.8,394.8 1276.0,394.3 1277.2,396.0 1278.5,394.9 1279.8,395.0 1281.0,394.6 1282.2,397.1 1283.5,397.7 1284.8,394.6 1286.0,396.7 1287.2,394.1 1288.5,395.2 1289.8,396.5 1291.0,397.9 1292.2,394.6 1293.5,395.0 1294.8,395.5 1296.0,393.0 1297.2,395.1 1298.5,394.2 1299.8,395.8 1301.0,393.6 1302.2,392.4 1303.5,395.2 1304.8,395.6 1306.0,394.4 1307.2,396.7 1308.5,394.7 1309.8,394.3 1311.0,396.0 1312.2,393.0 1313.5,394.2 1314.8,395.1 1316.0,396.7 1317.2,394.9 1318.5,395.7 1319.8,394.2 1321.0,395.7 1322.2,398.1 1323.5,394.2 1324.8,399.4 1326.0,394.2 1327.2,395.1 1328.5,395.4 1329.8,397.0 1331.0,393.4 1332.2,392.3 1333.5,396.2 1334.8,396.5 1336.0,396.2 1337.2,399.8 1338.5,395.5 1339.8,395.6 1341.0,396.8 1342.2,395.8 1343.5,398.1 1344.8,393.5 1346.0,394.6 1347.2,390.5 1348.5,396.6 1349.8,394.6 1351.0,396.7 1352.2,398.9 1353.5,395.1 1354.8,394.8 1356.0,394.4 1357.2,394.0 1358.5,394.3 1359.8,396.2 1361.0,395.2 1362.2,395.2 1363.5,394.9 1364.8,396.7 1366.0,396.0 1367.2,394.9 1368.5,396.3 1369.8,394.9 1371.0,393.6 1372.2,397.7 1373.5,395.9 1374.8,393.9 1376.0,397.0 1377.2,395.7 1378.5,393.1 1379.8,397.9 1381.0,395.7 1382.2,396.7 1383.5,395.4 1384.8,394.9 1386.0,393.1 1387.2,396.8 1388.5,395.2 1389.8,394.7 1391.0,395.7 1392.2,395.2 1393.5,396.3 1394.8,394.6 1396.0,395.1 1397.2,392.4 1398.5,394.6 1399.8,396.3 1401.0,397.4 1402.2,394.6 1403.5,394.9 1404.8,397.8 1406.0,394.7 1407.2,396.4 1408.5,398.0 1409.8,395.2 1411.0,397.2 1412.2,394.2 1413.5,395.5 1414.8,395.0 1416.0,395.3 1417.2,397.0 1418.5,399.2 1419.8,394.3 1421.0,394.4 1422.2,395.9 1423.5,393.8 1424.8,395.9 1426.0,396.1 1427.2,394.8 1428.5,396.0 1429.8,393.2 1431.0,396.4 1432.2,393.2 1433.5,394.2 1434.8,394.4 1436.0,394.6 1437.2,396.5 1438.5,395.2 1439.8,394.6 1441.0,396.0 1442.2,397.7 1443.5,395.1 1444.8,395.7 1446.0,397.2 1447.2,395.5 1448.5,393.5 1449.8,399.2 1451.0,398.8 1452.2,392.7 1453.5,395.1 1454.8,395.8 1456.0,396.7 1457.2,396.2 1458.5,394.8 1459.8,393.8 1461.0,395.3 1462.2,396.8 1463.5,393.8 1464.8,393.9 1466.0,395.1 1467.2,392.8 1468.5,394.8 1469.8,394.6 1471.0,395.8 1472.2,394.3 1473.5,394.0 1474.8,394.6 1476.0,395.0 1477.2,394.3 1478.5,395.1 1479.8,396.3 1481.0,397.0 1482.2,397.9 1483.5,394.2 1484.8,394.6 1486.0,392.1 1487.2,398.2 1488.5,394.2 1489.8,395.1 1491.0,395.9 1492.2,393.5 1493.5,395.8 1494.8,395.1 1496.0,392.9 1497.2,395.6 1498.5,397.0 1499.8,392.9 1501.0,396.4 1502.2,395.4 1503.5,395.9 1504.8,395.8 1506.0,397.2 1507.2,394.8 1508.5,396.5 1509.8,394.6 1511.0,396.2 1512.2,394.1 1513.5,395.0 1514.8,397.8 1516.0,395.8 1517.2,394.9 1518.5,393.8 1519.8,394.2 1521.0,395.4 1522.2,396.6 1523.5,395.8 1524.8,395.9 1526.0,395.1 1527.2,397.2 1528.5,394.6 1529.8,394.5 1531.0,396.5 1532.2,395.2 1533.5,394.8 1534.8,394.4 1536.0,394.8 1537.2,396.1 1538.5,395.6 1539.8,393.7 1541.0,395.8 1542.2,395.4 1543.5,394.0 1544.8,396.3 1546.0,394.8 1547.2,394.7 1548.5,396.3 1549.8,397.1 1551.0,394.3 1552.2,395.8 1553.5,394.1 1554.8,398.6 1556.0,394.5 1557.2,396.9 1558.5,394.4 1559.8,396.3 1561.0,398.5 1562.2,392.3 1563.5,394.6 1564.8,395.9 1566.0,395.0 1567.2,394.4 1568.5,398.3 1569.8,395.2 1571.0,393.3 1572.2,396.4 1573.5,393.2 1574.8,396.8 1576.0,394.5 1577.2,395.3 1578.5,397.0 1579.8,395.3 1581.0,393.6 1582.2,393.2 1583.5,396.9 1584.8,391.0 1586.0,389.2 1587.2,391.2 1588.5,390.7 1589.8,390.9 1591.0,387.7 1592.2,389.7 1593.5,391.2 1594.8,391.0 1596.0,391.2 1597.2,387.5 1598.5,390.2 1599.8,390.7 1601.0,393.4 1602.2,389.0 1603.5,389.7 1604.8,390.0 1606.0,391.2 1607.2,389.6 1608.5,391.5 1609.8,389.2 1611.0,390.4 1612.2,389.5 1613.5,390.2 1614.8,389.3 1616.0,388.4 1617.2,391.5 1618.5,390.4 1619.8,389.4 1621.0,390.3 1622.2,391.3 1623.5,389.0 1624.8,389.9 1626.0,390.7 1627.2,390.7 1628.5,389.7 1629.8,387.9 1631.0,391.7 1632.2,390.4 1633.5,390.0 1634.8,389.7 1636.0,390.4 1637.2,389.6 1638.5,389.0 1639.8,389.3 1641.0,389.4 1642.2,389.4 1643.5,388.8 1644.8,390.9 1646.0,388.7 1647.2,390.9 1648.5,389.0 1649.8,390.5 1651.0,391.9 1652.2,390.3 1653.2,389.7 1653.6,404.5" fill="none" stroke="#d8579e" stroke-width="1.1" stroke-linejoin="round" style="mix-blend-mode:screen"/>
<rect x="1656" y="55" width="1" height="1" fill="#d8d8d8"/>
<rect x="1656" y="61" width="1" height="1" fill="#d8d8d8"/>
<rect x="1656" y="66" width="1" height="1" fill="#d8d8d8"/>
<rect x="1656" y="72" width="1" height="1" fill="#d8d8d8"/>
<rect x="1656" y="77" width="1" height="1" fill="#d8d8d8"/>
<rect x="1656" y="83" width="3" height="1" fill="#e6e6e6"/>
<rect x="1656" y="88" width="1" height="1" fill="#d8d8d8"/>
<rect x="1656" y="94" width="1" height="1" fill="#d8d8d8"/>
<rect x="1656" y="100" width="1" height="1" fill="#d8d8d8"/>
<rect x="1656" y="105" width="1" height="1" fill="#d8d8d8"/>
<rect x="1656" y="111" width="1" height="1" fill="#d8d8d8"/>
<rect x="1656" y="116" width="3" height="1" fill="#e6e6e6"/>
<rect x="1656" y="122" width="1" height="1" fill="#d8d8d8"/>
<rect x="1656" y="127" width="1" height="1" fill="#d8d8d8"/>
<rect x="1656" y="133" width="1" height="1" fill="#d8d8d8"/>
<rect x="1656" y="138" width="1" height="1" fill="#d8d8d8"/>
<rect x="1656" y="144" width="1" height="1" fill="#d8d8d8"/>
<rect x="1656" y="149" width="3" height="1" fill="#e6e6e6"/>
<rect x="1656" y="155" width="1" height="1" fill="#d8d8d8"/>
<rect x="1656" y="161" width="1" height="1" fill="#d8d8d8"/>
<rect x="1656" y="166" width="1" height="1" fill="#d8d8d8"/>
<rect x="1656" y="172" width="1" height="1" fill="#d8d8d8"/>
<rect x="1656" y="177" width="1" height="1" fill="#d8d8d8"/>
<rect x="1656" y="183" width="3" height="1" fill="#e6e6e6"/>
<rect x="1656" y="188" width="1" height="1" fill="#d8d8d8"/>
<rect x="1656" y="194" width="1" height="1" fill="#d8d8d8"/>
<rect x="1656" y="199" width="1" height="1" fill="#d8d8d8"/>
<rect x="1656" y="205" width="1" height="1" fill="#d8d8d8"/>
<rect x="1656" y="211" width="1" height="1" fill="#d8d8d8"/>
<rect x="1656" y="216" width="3" height="1" fill="#e6e6e6"/>
<rect x="1656" y="222" width="1" height="1" fill="#d8d8d8"/>
<rect x="1656" y="227" width="1" height="1" fill="#d8d8d8"/>
<rect x="1656" y="233" width="1" height="1" fill="#d8d8d8"/>
<rect x="1656" y="238" width="1" height="1" fill="#d8d8d8"/>
<rect x="1656" y="244" width="1" height="1" fill="#d8d8d8"/>
<rect x="1656" y="249" width="3" height="1" fill="#e6e6e6"/>
<rect x="1656" y="255" width="1" height="1" fill="#d8d8d8"/>
<rect x="1656" y="260" width="1" height="1" fill="#d8d8d8"/>
<rect x="1656" y="266" width="1" height="1" fill="#d8d8d8"/>
<rect x="1656" y="272" width="1" height="1" fill="#d8d8d8"/>
<rect x="1656" y="277" width="1" height="1" fill="#d8d8d8"/>
<rect x="1656" y="283" width="3" height="1" fill="#e6e6e6"/>
<rect x="1656" y="288" width="1" height="1" fill="#d8d8d8"/>
<rect x="1656" y="294" width="1" height="1" fill="#d8d8d8"/>
<rect x="1656" y="299" width="1" height="1" fill="#d8d8d8"/>
<rect x="1656" y="305" width="1" height="1" fill="#d8d8d8"/>
<rect x="1656" y="310" width="1" height="1" fill="#d8d8d8"/>
<rect x="1656" y="316" width="3" height="1" fill="#e6e6e6"/>
<rect x="1656" y="322" width="1" height="1" fill="#d8d8d8"/>
<rect x="1656" y="327" width="1" height="1" fill="#d8d8d8"/>
<rect x="1656" y="333" width="1" height="1" fill="#d8d8d8"/>
<rect x="1656" y="338" width="1" height="1" fill="#d8d8d8"/>
<rect x="1656" y="344" width="1" height="1" fill="#d8d8d8"/>
<rect x="1656" y="349" width="3" height="1" fill="#e6e6e6"/>
<rect x="1656" y="355" width="1" height="1" fill="#d8d8d8"/>
<rect x="1656" y="360" width="1" height="1" fill="#d8d8d8"/>
<rect x="1656" y="366" width="1" height="1" fill="#d8d8d8"/>
<rect x="1656" y="371" width="1" height="1" fill="#d8d8d8"/>
<rect x="1656" y="377" width="1" height="1" fill="#d8d8d8"/>
<rect x="1656" y="383" width="3" height="1" fill="#e6e6e6"/>
<rect x="1656" y="388" width="1" height="1" fill="#d8d8d8"/>
<rect x="1656" y="394" width="1" height="1" fill="#d8d8d8"/>
<rect x="1656" y="399" width="1" height="1" fill="#d8d8d8"/>
<rect x="1656" y="405" width="1" height="1" fill="#d8d8d8"/>
<rect x="1656" y="410" width="1" height="1" fill="#d8d8d8"/>
<rect x="1656" y="416" width="3" height="1" fill="#e6e6e6"/>
<rect x="1656" y="421" width="1" height="1" fill="#d8d8d8"/>
<rect x="1656" y="427" width="1" height="1" fill="#d8d8d8"/>
<rect x="1656" y="433" width="1" height="1" fill="#d8d8d8"/>
<rect x="1656" y="438" width="1" height="1" fill="#d8d8d8"/>
<rect x="1656" y="444" width="1" height="1" fill="#d8d8d8"/>
<rect x="1656" y="449" width="3" height="1" fill="#e6e6e6"/>
<rect x="1656" y="455" width="1" height="1" fill="#d8d8d8"/>
<rect x="1656" y="460" width="1" height="1" fill="#d8d8d8"/>
<rect x="1656" y="466" width="1" height="1" fill="#d8d8d8"/>
<rect x="1656" y="471" width="1" height="1" fill="#d8d8d8"/>
<rect x="1656" y="477" width="1" height="1" fill="#d8d8d8"/>
<rect x="1656" y="482" width="3" height="1" fill="#e6e6e6"/>
<rect x="1656" y="488" width="1" height="1" fill="#d8d8d8"/>
<rect x="1656" y="494" width="1" height="1" fill="#d8d8d8"/>
<rect x="1656" y="499" width="1" height="1" fill="#d8d8d8"/>
<rect x="1656" y="505" width="1" height="1" fill="#d8d8d8"/>
<rect x="1656" y="510" width="1" height="1" fill="#d8d8d8"/>
<rect x="1656" y="516" width="3" height="1" fill="#e6e6e6"/>
<rect x="1656" y="521" width="1" height="1" fill="#d8d8d8"/>
<rect x="1656" y="527" width="1" height="1" fill="#d8d8d8"/>
<rect x="1656" y="532" width="1" height="1" fill="#d8d8d8"/>
<rect x="1656" y="538" width="1" height="1" fill="#d8d8d8"/>
<rect x="1656" y="544" width="1" height="1" fill="#d8d8d8"/>
<rect x="1656" y="549" width="3" height="1" fill="#e6e6e6"/>
<rect x="1656" y="555" width="1" height="1" fill="#d8d8d8"/>
<rect x="1656" y="560" width="1" height="1" fill="#d8d8d8"/>
<rect x="1656" y="566" width="1" height="1" fill="#d8d8d8"/>
<rect x="1656" y="571" width="1" height="1" fill="#d8d8d8"/>
<rect x="1656" y="577" width="1" height="1" fill="#d8d8d8"/>
<rect x="1656" y="582" width="3" height="1" fill="#e6e6e6"/>
<rect x="1656" y="588" width="1" height="1" fill="#d8d8d8"/>
<rect x="1656" y="593" width="1" height="1" fill="#d8d8d8"/>
<rect x="1656" y="599" width="1" height="1" fill="#d8d8d8"/>
<rect x="1656" y="605" width="1" height="1" fill="#d8d8d8"/>
<rect x="1656" y="610" width="1" height="1" fill="#d8d8d8"/>
<rect x="1656" y="616" width="3" height="1" fill="#e6e6e6"/>
<rect x="1656" y="621" width="1" height="1" fill="#d8d8d8"/>
<rect x="1656" y="627" width="1" height="1" fill="#d8d8d8"/>
<rect x="1656" y="632" width="1" height="1" fill="#d8d8d8"/>
<rect x="1656" y="638" width="1" height="1" fill="#d8d8d8"/>
<rect x="1656" y="643" width="1" height="1" fill="#d8d8d8"/>
<rect x="1656" y="649" width="3" height="1" fill="#e6e6e6"/>
<rect x="1656" y="655" width="1" height="1" fill="#d8d8d8"/>
<rect x="1656" y="660" width="1" height="1" fill="#d8d8d8"/>
<rect x="1656" y="666" width="1" height="1" fill="#d8d8d8"/>
<rect x="1656" y="671" width="1" height="1" fill="#d8d8d8"/>
<rect x="1656" y="677" width="1" height="1" fill="#d8d8d8"/>
<rect x="1656" y="682" width="3" height="1" fill="#e6e6e6"/>
<rect x="1656" y="688" width="1" height="1" fill="#d8d8d8"/>
<rect x="1656" y="693" width="1" height="1" fill="#d8d8d8"/>
<rect x="1656" y="699" width="1" height="1" fill="#d8d8d8"/>
<rect x="1656" y="704" width="1" height="1" fill="#d8d8d8"/>
<rect x="1656" y="710" width="1" height="1" fill="#d8d8d8"/>
<rect x="1656" y="716" width="3" height="1" fill="#e6e6e6"/>
<rect x="1656" y="721" width="1" height="1" fill="#d8d8d8"/>
<rect x="1656" y="727" width="1" height="1" fill="#d8d8d8"/>
<rect x="1656" y="732" width="1" height="1" fill="#d8d8d8"/>
<rect x="1656" y="738" width="1" height="1" fill="#d8d8d8"/>
<rect x="1656" y="743" width="1" height="1" fill="#d8d8d8"/>
<rect x="1656" y="749" width="3" height="1" fill="#e6e6e6"/>
<rect x="1656" y="754" width="1" height="1" fill="#d8d8d8"/>
<rect x="1656" y="760" width="1" height="1" fill="#d8d8d8"/>
<rect x="1656" y="766" width="1" height="1" fill="#d8d8d8"/>
<rect x="1656" y="771" width="1" height="1" fill="#d8d8d8"/>
<rect x="1656" y="777" width="1" height="1" fill="#d8d8d8"/>
<rect x="1656" y="782" width="3" height="1" fill="#e6e6e6"/>
<rect x="1656" y="788" width="1" height="1" fill="#d8d8d8"/>
<rect x="1656" y="793" width="1" height="1" fill="#d8d8d8"/>
<rect x="1656" y="799" width="1" height="1" fill="#d8d8d8"/>
<rect x="1656" y="804" width="1" height="1" fill="#d8d8d8"/>
<rect x="1656" y="810" width="1" height="1" fill="#d8d8d8"/>
<rect x="1656" y="815" width="3" height="1" fill="#e6e6e6"/>
<rect x="1656" y="821" width="1" height="1" fill="#d8d8d8"/>
<rect x="1656" y="827" width="1" height="1" fill="#d8d8d8"/>
<rect x="1656" y="50" width="3" height="1" fill="#e6e6e6"/>
<rect x="15" y="829" width="1" height="3" fill="#e6e6e6"/>
<rect x="160" y="829" width="1" height="2" fill="#e6e6e6"/>
<rect x="247" y="829" width="1" height="2" fill="#e6e6e6"/>
<rect x="308" y="829" width="1" height="2" fill="#e6e6e6"/>
<rect x="356" y="829" width="1" height="2" fill="#e6e6e6"/>
<rect x="395" y="829" width="1" height="2" fill="#e6e6e6"/>
<rect x="428" y="829" width="1" height="2" fill="#e6e6e6"/>
<rect x="456" y="829" width="1" height="2" fill="#e6e6e6"/>
<rect x="481" y="829" width="1" height="2" fill="#e6e6e6"/>
<rect x="505" y="829" width="1" height="4" fill="#e6e6e6"/>
<rect x="652" y="829" width="1" height="2" fill="#e6e6e6"/>
<rect x="738" y="829" width="1" height="2" fill="#e6e6e6"/>
<rect x="800" y="829" width="1" height="2" fill="#e6e6e6"/>
<rect x="847" y="829" width="1" height="2" fill="#e6e6e6"/>
<rect x="886" y="829" width="1" height="2" fill="#e6e6e6"/>
<rect x="919" y="829" width="1" height="2" fill="#e6e6e6"/>
<rect x="948" y="829" width="1" height="2" fill="#e6e6e6"/>
<rect x="973" y="829" width="1" height="2" fill="#e6e6e6"/>
<rect x="996" y="829" width="1" height="4" fill="#e6e6e6"/>
<rect x="1143" y="829" width="1" height="2" fill="#e6e6e6"/>
<rect x="1230" y="829" width="1" height="2" fill="#e6e6e6"/>
<rect x="1291" y="829" width="1" height="2" fill="#e6e6e6"/>
<rect x="1339" y="829" width="1" height="2" fill="#e6e6e6"/>
<rect x="1378" y="829" width="1" height="2" fill="#e6e6e6"/>
<rect x="1411" y="829" width="1" height="2" fill="#e6e6e6"/>
<rect x="1439" y="829" width="1" height="2" fill="#e6e6e6"/>
<rect x="1464" y="829" width="1" height="2" fill="#e6e6e6"/>
<rect x="1486" y="829" width="1" height="4" fill="#e6e6e6"/>
<rect x="1635" y="829" width="1" height="2" fill="#e6e6e6"/>
</svg>
<span class="t " style="left:8.00px;top:7.34px;font-size:12px;color:#0b1118;transform:scaleX(0.9755);">Frequency Analysis</span>
<span class="t " style="left:29.80px;top:31.64px;font-size:12px;color:#ececec;transform:scaleX(0.8962);">Linear View</span>
<span class="t " style="left:819.00px;top:28.92px;font-size:19px;color:#f2f2f2;transform:scaleX(1.0195);">C#5 +4</span>
<span class="t " style="left:1601.00px;top:32.64px;font-size:12px;color:#ececec;transform:scaleX(0.9117);">Hold</span>
<div style="left:12px;top:31px;width:13px;height:13px;background:#fbfbfb;box-shadow:inset 1px 1px 0 #8a8a8a,inset -1px -1px 0 #d8d8d8,inset 2px 2px 0 #cfcfcf"></div>
<div class="hb" style="left:1629px;top:30px;background:#5fae6c;color:#d9f5c8">1</div>
<div class="hb" style="left:1645px;top:30px;background:#b86f70;color:#ffffff">2</div>
<div class="hb" style="left:1661px;top:30px;background:#6f70b4;color:#ffffff">3</div>
<div class="hb" style="left:1677px;top:30px;background:#a3a465;color:#f0f0a8">4</div>
<div id="cls" style="left:1681px;top:6px;width:15px;height:15px"><span>x</span></div>
<span class="t " style="left:1661.00px;top:48.56px;font-size:9.5px;color:#e2e2e2;transform:scaleX(0.9897);">dB</span>
<span class="t " style="left:1661.00px;top:818.76px;font-size:9.5px;color:#e2e2e2;transform:scaleX(0.9897);">dB</span>
<span class="t " style="left:1661.30px;top:78.09px;font-size:9.7px;color:#e2e2e2;transform:scaleX(0.8900);">6</span>
<span class="t " style="left:1661.30px;top:111.39px;font-size:9.7px;color:#e2e2e2;transform:scaleX(0.8900);">0</span>
<span class="t " style="left:1661.30px;top:144.69px;font-size:9.7px;color:#e2e2e2;transform:scaleX(0.8900);">-6</span>
<span class="t " style="left:1661.30px;top:177.99px;font-size:9.7px;color:#e2e2e2;transform:scaleX(0.8900);">-12</span>
<span class="t " style="left:1661.30px;top:211.29px;font-size:9.7px;color:#e2e2e2;transform:scaleX(0.8900);">-18</span>
<span class="t " style="left:1661.30px;top:244.58px;font-size:9.7px;color:#e2e2e2;transform:scaleX(0.8900);">-24</span>
<span class="t " style="left:1661.30px;top:277.88px;font-size:9.7px;color:#e2e2e2;transform:scaleX(0.8900);">-30</span>
<span class="t " style="left:1661.30px;top:311.18px;font-size:9.7px;color:#e2e2e2;transform:scaleX(0.8900);">-36</span>
<span class="t " style="left:1661.30px;top:344.48px;font-size:9.7px;color:#e2e2e2;transform:scaleX(0.8900);">-42</span>
<span class="t " style="left:1661.30px;top:377.78px;font-size:9.7px;color:#e2e2e2;transform:scaleX(0.8900);">-48</span>
<span class="t " style="left:1661.30px;top:411.08px;font-size:9.7px;color:#e2e2e2;transform:scaleX(0.8900);">-54</span>
<span class="t " style="left:1661.30px;top:444.38px;font-size:9.7px;color:#e2e2e2;transform:scaleX(0.8900);">-60</span>
<span class="t " style="left:1661.30px;top:477.68px;font-size:9.7px;color:#e2e2e2;transform:scaleX(0.8900);">-66</span>
<span class="t " style="left:1661.30px;top:510.97px;font-size:9.7px;color:#e2e2e2;transform:scaleX(0.8900);">-72</span>
<span class="t " style="left:1661.30px;top:544.27px;font-size:9.7px;color:#e2e2e2;transform:scaleX(0.8900);">-78</span>
<span class="t " style="left:1661.30px;top:577.57px;font-size:9.7px;color:#e2e2e2;transform:scaleX(0.8900);">-84</span>
<span class="t " style="left:1661.30px;top:610.87px;font-size:9.7px;color:#e2e2e2;transform:scaleX(0.8900);">-90</span>
<span class="t " style="left:1661.30px;top:644.17px;font-size:9.7px;color:#e2e2e2;transform:scaleX(0.8900);">-96</span>
<span class="t " style="left:1661.30px;top:677.47px;font-size:9.7px;color:#e2e2e2;transform:scaleX(0.8900);">-102</span>
<span class="t " style="left:1661.30px;top:710.77px;font-size:9.7px;color:#e2e2e2;transform:scaleX(0.8900);">-108</span>
<span class="t " style="left:1661.30px;top:744.07px;font-size:9.7px;color:#e2e2e2;transform:scaleX(0.8900);">-114</span>
<span class="t " style="left:1661.30px;top:777.36px;font-size:9.7px;color:#e2e2e2;transform:scaleX(0.8900);">-120</span>
<span class="t " style="left:16.00px;top:832.76px;font-size:9.5px;color:#e2e2e2;transform:scaleX(0.9043);">Hz</span>
<span class="t " style="left:1642.80px;top:832.76px;font-size:9.5px;color:#e2e2e2;transform:scaleX(0.9302);">Hz</span>
<span class="t " style="left:155.74px;top:830.86px;font-size:9.5px;color:#70757a;transform:scaleX(0.9000);">20</span>
<span class="t " style="left:242.64px;top:830.86px;font-size:9.5px;color:#70757a;transform:scaleX(0.9000);">30</span>
<span class="t " style="left:303.64px;top:830.86px;font-size:9.5px;color:#70757a;transform:scaleX(0.9000);">40</span>
<span class="t " style="left:351.54px;top:830.86px;font-size:9.5px;color:#70757a;transform:scaleX(0.9000);">50</span>
<span class="t " style="left:390.64px;top:830.86px;font-size:9.5px;color:#70757a;transform:scaleX(0.9000);">60</span>
<span class="t " style="left:423.94px;top:830.86px;font-size:9.5px;color:#70757a;transform:scaleX(0.9000);">70</span>
<span class="t " style="left:451.64px;top:830.86px;font-size:9.5px;color:#70757a;transform:scaleX(0.9000);">80</span>
<span class="t " style="left:476.84px;top:830.86px;font-size:9.5px;color:#70757a;transform:scaleX(0.9000);">90</span>
<span class="t " style="left:498.47px;top:832.76px;font-size:9.5px;color:#e2e2e2;transform:scaleX(0.9000);">100</span>
<span class="t " style="left:645.37px;top:830.86px;font-size:9.5px;color:#70757a;transform:scaleX(0.9000);">200</span>
<span class="t " style="left:731.27px;top:830.86px;font-size:9.5px;color:#70757a;transform:scaleX(0.9000);">300</span>
<span class="t " style="left:793.37px;top:830.86px;font-size:9.5px;color:#70757a;transform:scaleX(0.9000);">400</span>
<span class="t " style="left:840.17px;top:830.86px;font-size:9.5px;color:#70757a;transform:scaleX(0.9000);">500</span>
<span class="t " style="left:879.47px;top:830.86px;font-size:9.5px;color:#70757a;transform:scaleX(0.9000);">600</span>
<span class="t " style="left:912.47px;top:830.86px;font-size:9.5px;color:#70757a;transform:scaleX(0.9000);">700</span>
<span class="t " style="left:940.97px;top:830.86px;font-size:9.5px;color:#70757a;transform:scaleX(0.9000);">800</span>
<span class="t " style="left:986.89px;top:832.76px;font-size:9.5px;color:#e2e2e2;transform:scaleX(0.9000);">1000</span>
<span class="t " style="left:1134.09px;top:830.86px;font-size:9.5px;color:#70757a;transform:scaleX(0.9000);">2000</span>
<span class="t " style="left:1220.99px;top:830.86px;font-size:9.5px;color:#70757a;transform:scaleX(0.9000);">3000</span>
<span class="t " style="left:1281.79px;top:830.86px;font-size:9.5px;color:#70757a;transform:scaleX(0.9000);">4000</span>
<span class="t " style="left:1330.09px;top:830.86px;font-size:9.5px;color:#70757a;transform:scaleX(0.9000);">5000</span>
<span class="t " style="left:1368.89px;top:830.86px;font-size:9.5px;color:#70757a;transform:scaleX(0.9000);">6000</span>
<span class="t " style="left:1401.89px;top:830.86px;font-size:9.5px;color:#70757a;transform:scaleX(0.9000);">7000</span>
<span class="t " style="left:1429.99px;top:830.86px;font-size:9.5px;color:#70757a;transform:scaleX(0.9000);">8000</span>
<span class="t " style="left:1474.61px;top:832.76px;font-size:9.5px;color:#e2e2e2;transform:scaleX(0.9000);">10000</span>
<span class="t " style="left:33.40px;top:186.04px;font-size:22.4px;color:#ed1c24;font-weight:bold;transform:scaleX(1.0365);">10Hz</span>
<span class="t " style="left:1531.80px;top:555.94px;font-size:22.4px;color:#ed1c24;font-weight:bold;transform:scaleX(1.0840);">22000Hz</span>
<span class="t " style="left:17.80px;top:853.69px;font-size:11px;color:#dcdcdc;transform:scaleX(0.9722);">10.09 Hz, L=-51.85 dB, R=-51.85 dB</span>
<span class="t " style="left:858.00px;top:853.69px;font-size:11px;color:#dcdcdc;transform:scaleX(0.9783);">L= 555.71 Hz (C#5 +4), R= 2436.5 Hz (D#7 -36)</span>
<div style="left:12px;top:873px;width:119px;height:19px;background:rgba(0,0,0,.28);box-shadow:1px 1px 0 #989ea6;"></div>
<span class="t " style="left:15.50px;top:876.84px;font-size:12px;color:#f0f0f0;transform:scaleX(0.9237);">Lines</span>
<div class="dd" style="left:113px;top:874px"><svg width="17" height="17"><polygon points="5,7 12,7 8.5,11.2" fill="#000"/></svg></div>
<span class="t " style="left:160.30px;top:876.04px;font-size:12px;color:#ececec;transform:scaleX(0.8772);">FFT Size</span>
<div style="left:206px;top:873px;width:62px;height:19px;background:rgba(0,0,0,.28);box-shadow:1px 1px 0 #989ea6;"></div>
<span class="t " style="left:209.60px;top:876.84px;font-size:12px;color:#f0f0f0;transform:scaleX(0.9440);">65536</span>
<div class="dd" style="left:250px;top:874px"><svg width="17" height="17"><polygon points="5,7 12,7 8.5,11.2" fill="#000"/></svg></div>
<div style="left:273px;top:873px;width:134px;height:19px;background:rgba(0,0,0,.28);box-shadow:1px 1px 0 #989ea6;"></div>
<span class="t " style="left:276.60px;top:876.84px;font-size:12px;color:#f0f0f0;transform:scaleX(0.8862);">Blackmann-Harris</span>
<div class="dd" style="left:389px;top:874px"><svg width="17" height="17"><polygon points="5,7 12,7 8.5,11.2" fill="#000"/></svg></div>
<span class="t " style="left:13.00px;top:898.64px;font-size:12px;color:#ececec;transform:scaleX(0.9212);">Reference</span>
<div style="left:66px;top:896px;width:37px;height:17px;background:rgba(0,0,0,.28);box-shadow:1px 1px 0 #989ea6;"></div>
<span class="t " style="left:67.50px;top:898.64px;font-size:12px;color:#ececec;transform:scaleX(0.9290);">0</span>
<span class="t " style="left:106.50px;top:900.44px;font-size:12px;color:#ececec;transform:scaleX(0.8330);">dBFS</span>
<div class="btn" style="left:137px;top:898px;width:99px;height:15px;background:linear-gradient(135deg,#aab4c4 0%,#7f8b9f 45%,#566276 100%)"></div>
<span class="t " style="left:144.50px;top:900.89px;font-size:11px;color:#1c2128;transform:scaleX(0.9540);text-shadow:1px 1px 0 rgba(255,255,255,.9);-webkit-text-stroke:0.35px #1c2128;">Copy to Clipboard</span>
<div class="btn" style="left:1567px;top:898px;width:60px;height:15px;background:linear-gradient(135deg,#aab4c4 0%,#7f8b9f 45%,#566276 100%)"></div>
<span class="t " style="left:1585.50px;top:900.89px;font-size:11px;color:#1c2128;transform:scaleX(0.9173);text-shadow:1px 1px 0 rgba(255,255,255,.9);-webkit-text-stroke:0.35px #1c2128;">Scan</span>
<div class="btn" style="left:1631px;top:899px;width:60px;height:15px;background:linear-gradient(135deg,#e6ecf6 0%,#b9c6dc 45%,#8d9cb6 100%)"></div>
<span class="t " style="left:1638.00px;top:901.89px;font-size:11px;color:#1c2128;transform:scaleX(0.9402);text-shadow:1px 1px 0 rgba(255,255,255,.9);-webkit-text-stroke:0.35px #1c2128;">Advanced</span>
<svg style="left:0;top:0" width="1706" height="934" viewBox="0 0 1706 934">
<polyline points="-30,301 7.8,301 7.8,233.2 73.4,233.2 73.4,301 103,301 40,366.2 -25,301" fill="none" stroke="#ed1c24" stroke-width="5" stroke-linejoin="miter"/>
<polygon points="1653.7,410.4 1680.4,466.5 1667,466.5 1667,528.5 1640,528.5 1640,466.5 1627,466.5" fill="none" stroke="#ed1c24" stroke-width="5" stroke-linejoin="miter"/>
</svg>
</div>
</body></html>
